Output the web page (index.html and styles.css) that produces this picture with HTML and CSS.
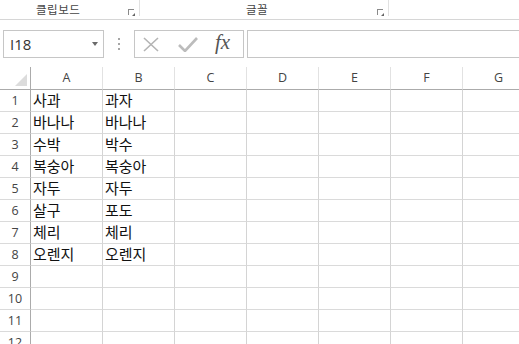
FILE: index.html
```html
<!DOCTYPE html>
<html lang="ko">

<head>
    <meta charset="UTF-8">
    <title>통합 문서</title>
    <link rel="stylesheet" href="styles.css">
</head>

<body>
    <div class="ribbon">
        <div class="group group-clip">
            <span class="group-label">클립보드</span>
            <span class="launcher"></span>
        </div>
        <div class="group group-font">
            <span class="group-label">글꼴</span>
            <span class="launcher"></span>
        </div>
        <div class="group group-rest"></div>
    </div>

    <div class="formula-bar">
        <div class="name-box">
            <span>I18</span>
            <span class="arrow"></span>
        </div>
        <div class="grip"><i></i><i></i><i></i></div>
        <div class="fx-buttons">
            <svg width="16" height="15" viewBox="0 0 16 15"><path d="M1 1 L15 14 M15 1 L1 14" stroke="#b4b4b4" stroke-width="1.6" fill="none"/></svg>
            <svg width="20" height="15" viewBox="0 0 20 15"><path d="M1 8 L7 14 L19 1" stroke="#bcbcbc" stroke-width="2.6" fill="none"/></svg>
            <span class="fx">fx</span>
        </div>
        <div class="formula-input"></div>
    </div>

    <div class="sheet sheet-head">
        <div class="corner"><span class="tri"></span></div>
        <div class="col-head">A</div>
        <div class="col-head">B</div>
        <div class="col-head">C</div>
        <div class="col-head">D</div>
        <div class="col-head">E</div>
        <div class="col-head">F</div>
        <div class="col-head">G</div>
    </div>
    <div class="sheet" id="rows"></div>

    <script>
        const data = [
            ['사과', '과자'], ['바나나', '바나나'], ['수박', '박수'], ['복숭아', '복숭아'],
            ['자두', '자두'], ['살구', '포도'], ['체리', '체리'], ['오렌지', '오렌지'],
            ['', ''], ['', ''], ['', ''], ['', '']
        ];
        const rows = document.getElementById('rows');
        data.forEach(function (r, i) {
            const head = document.createElement('div');
            head.className = 'row-head';
            head.textContent = i + 1;
            rows.appendChild(head);
            for (let c = 0; c < 7; c++) {
                const cell = document.createElement('div');
                cell.className = 'cell';
                cell.textContent = r[c] || '';
                rows.appendChild(cell);
            }
        });
    </script>
</body>

</html>
```

FILE: styles.css
```css
body {
    margin: 0;
    width: 519px;
    height: 344px;
    overflow: hidden;
    background-color: #ffffff;
    font-family: "Open Sans", "Noto Sans CJK KR", sans-serif;
}

.ribbon {
    display: flex;
    height: 19px;
    border-bottom: 1px solid #d6d6d6;
}

.group {
    position: relative;
    height: 16px;
    border-right: 1px solid #e1e1e1;
}

.group-clip {
    width: 139px;
}

.group-font {
    width: 248px;
}

.group-rest {
    flex: 1;
    border-right: none;
}

.group-label {
    display: block;
    font-family: "Noto Sans CJK KR", sans-serif;
    font-size: 11.5px;
    letter-spacing: 0.5px;
    color: #444444;
    line-height: 19px;
}

.group-clip .group-label {
    padding-left: 36px;
}

.group-font .group-label {
    padding-left: 106px;
}

.launcher {
    position: absolute;
    right: 5px;
    top: 9px;
    width: 5px;
    height: 5px;
    border-left: 1px solid #8a8a8a;
    border-top: 1px solid #8a8a8a;
}

.launcher::after {
    content: "";
    position: absolute;
    right: -1px;
    bottom: -1px;
    border-left: 3px solid transparent;
    border-bottom: 3px solid #666666;
}

.formula-bar {
    display: flex;
    align-items: center;
    height: 28px;
    margin-top: 10px;
    padding-left: 3px;
}

.name-box {
    display: flex;
    align-items: center;
    justify-content: space-between;
    box-sizing: border-box;
    width: 101px;
    height: 28px;
    border: 1px solid #c6c6c6;
    padding: 0 5px 0 6px;
    font-size: 15px;
    color: #333333;
}

.arrow {
    border-left: 3.5px solid transparent;
    border-right: 3.5px solid transparent;
    border-top: 4px solid #6a6a6a;
}

.grip {
    display: flex;
    flex-direction: column;
    gap: 3px;
    width: 30px;
    align-items: center;
}

.grip i {
    width: 2px;
    height: 2px;
    background-color: #a6a6a6;
}

.fx-buttons {
    display: flex;
    align-items: center;
    box-sizing: border-box;
    width: 110px;
    height: 28px;
    border: 1px solid #c6c6c6;
    padding-left: 8px;
    gap: 19px;
}

.fx {
    font-family: "Liberation Serif", serif;
    font-style: italic;
    font-size: 21px;
    color: #555555;
    margin-top: -3px;
    margin-left: -2px;
}

.formula-input {
    flex: 1;
    height: 28px;
    box-sizing: border-box;
    margin-left: 3px;
    border: 1px solid #c6c6c6;
    border-right: none;
}

.sheet {
    display: grid;
    grid-template-columns: 31px repeat(7, 72px);
}

.sheet-head {
    margin-top: 9px;
}

.corner,
.col-head {
    box-sizing: border-box;
    height: 23px;
    border-bottom: 1px solid #ababab;
    border-right: 1px solid #e2e2e2;
}

.corner {
    position: relative;
    border-right: 1px solid #ababab;
}

.tri {
    position: absolute;
    right: 3px;
    bottom: 3px;
    border-left: 12px solid transparent;
    border-bottom: 12px solid #dcdcdc;
}

.col-head {
    text-align: center;
    font-size: 12.5px;
    line-height: 21px;
    color: #444444;
}

.row-head,
.cell {
    box-sizing: border-box;
    height: 22px;
    border-bottom: 1px solid #dadada;
    border-right: 1px solid #d4d4d4;
}

.row-head {
    border-right: 1px solid #ababab;
    text-align: center;
    font-size: 12.5px;
    line-height: 22px;
    color: #444444;
}

.cell {
    padding-left: 2px;
    font-family: "Noto Sans CJK KR", sans-serif;
    font-size: 15px;
    line-height: 20px;
    color: #111111;
    white-space: nowrap;
}
```
